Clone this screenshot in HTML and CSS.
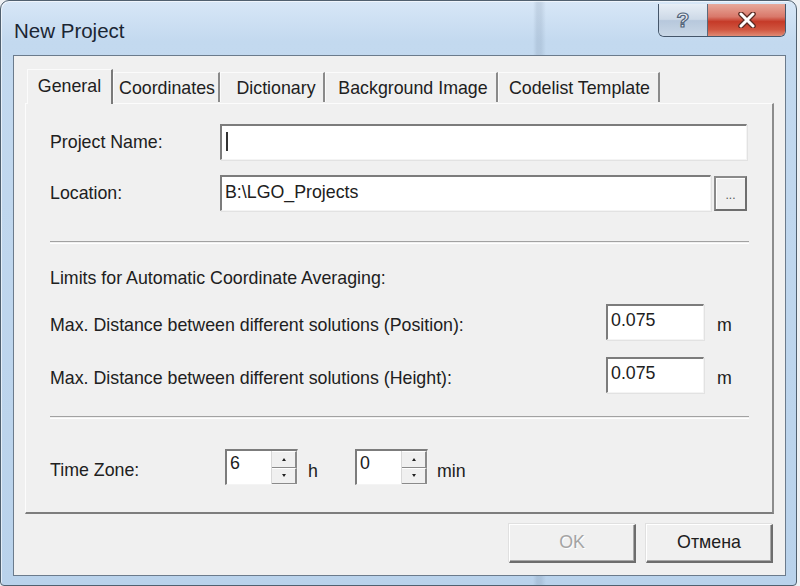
FILE: index.html
```html
<!DOCTYPE html>
<html>
<head>
<meta charset="utf-8">
<title>New Project</title>
<link rel="stylesheet" href="styles.css">
</head>
<body>
<div class="window">
  <div class="titlebar">
    <div class="title">New Project</div>
    <div class="caption-btns">
      <div class="cbtn help"><span class="q">?</span></div>
      <div class="cbtn close">
        <svg width="22" height="16" viewBox="0 0 22 16">
          <path d="M5 2 L17 14 M17 2 L5 14" stroke="#5a2a22" stroke-width="5.5" stroke-linecap="round"/>
          <path d="M5 2 L17 14 M17 2 L5 14" stroke="#ffffff" stroke-width="3" stroke-linecap="round"/>
        </svg>
      </div>
    </div>
  </div>
  <div class="client">
    <div class="tabs">
      <div class="tab active t-general">General</div>
      <div class="tab t-coord">Coordinates</div>
      <div class="tab t-dict">Dictionary</div>
      <div class="tab t-bg">Background Image</div>
      <div class="tab t-code">Codelist Template</div>
    </div>
    <div class="panel">
      <div class="row r-name">
        <span class="lbl">Project Name:</span>
        <div class="field grow"><span class="caret"></span></div>
      </div>
      <div class="row r-loc">
        <span class="lbl">Location:</span>
        <div class="field grow">B:\LGO_Projects</div>
        <div class="browse">...</div>
      </div>
      <div class="sep sep1"></div>
      <div class="heading">Limits for Automatic Coordinate Averaging:</div>
      <div class="row r-pos">
        <span class="grow">Max. Distance between different solutions (Position):</span>
        <div class="field num">0.075</div>
        <span class="unit">m</span>
      </div>
      <div class="row r-hgt">
        <span class="grow">Max. Distance between different solutions (Height):</span>
        <div class="field num">0.075</div>
        <span class="unit">m</span>
      </div>
      <div class="sep sep2"></div>
      <div class="row r-time">
        <span class="lbl-time">Time Zone:</span>
        <div class="spin">
          <div class="spin-val">6</div>
          <div class="spin-btns">
            <div class="sb up"><i></i></div>
            <div class="sb down"><i></i></div>
          </div>
        </div>
        <span class="spin-unit u-h">h</span>
        <div class="spin">
          <div class="spin-val">0</div>
          <div class="spin-btns">
            <div class="sb up"><i></i></div>
            <div class="sb down"><i></i></div>
          </div>
        </div>
        <span class="spin-unit u-min">min</span>
      </div>
    </div>
    <div class="buttons">
      <div class="btn disabled">OK</div>
      <div class="btn">Отмена</div>
    </div>
  </div>
</div>
</body>
</html>
```

FILE: styles.css
```css
html, body {
  margin: 0;
  padding: 0;
  background: #eef1f4;
}
body {
  width: 800px;
  height: 586px;
  overflow: hidden;
  font-family: "Liberation Sans", Arial, sans-serif;
  font-size: 17.8px;
  color: #202020;
}
.window {
  box-sizing: border-box;
  width: 797px;
  height: 586px;
  border: 1px solid #50606f;
  border-radius: 9px 9px 4px 4px;
  background:
    linear-gradient(to right, transparent 532px, rgba(70,90,115,0.13) 536px, rgba(70,90,115,0.13) 540px, transparent 545px),
    linear-gradient(to bottom, #d7e7f7 0px, #c3d9ef 40px, #b9d2eb 100%);
  display: flex;
  flex-direction: column;
  box-shadow: inset 1px 1px 0 rgba(255,255,255,0.6);
}
.titlebar {
  height: 54px;
  display: flex;
  align-items: flex-start;
  justify-content: space-between;
}
.title {
  margin: 18px 0 0 13px;
  font-size: 20.5px;
  color: #1b2633;
}
.caption-btns {
  display: flex;
  margin: 3px 10px 0 0;
  border: 1px solid #45566a;
  border-top: none;
  border-radius: 0 0 6px 6px;
  overflow: hidden;
  height: 32px;
}
.cbtn {
  display: flex;
  align-items: center;
  justify-content: center;
}
.help {
  width: 48px;
  background: linear-gradient(to bottom, #e7eef6 0%, #cdd9e7 48%, #b7c8dc 52%, #c9d7e6 100%);
  border-right: 1px solid #5a6a7c;
}
.q {
  font-family: "Liberation Sans", Arial, sans-serif;
  font-weight: bold;
  font-size: 21px;
  color: #e9eef4;
  -webkit-text-stroke: 1.2px #52647a;
  margin-top: -1px;
}
.close {
  width: 77px;
  background: linear-gradient(to bottom, #e8a99b 0%, #d9786a 40%, #c53a28 55%, #d0553f 80%, #e08a74 100%);
}
.client {
  flex: 1;
  margin: 0 10px 9px 12px;
  border: 1px solid #6b7b8c;
  background: #f0f0f0;
  padding: 12px 11px 0 11px;
  display: flex;
  flex-direction: column;
}
.tabs {
  display: flex;
  align-items: flex-end;
  height: 35px;
  margin-left: 2px;
  position: relative;
  z-index: 2;
}
.tab {
  box-sizing: border-box;
  height: 30px;
  margin-bottom: 1px;
  border-top: 1px solid #fbfbfb;
  border-left: 1px solid #fbfbfb;
  border-right: 2px solid #8a8a8a;
  display: flex;
  align-items: center;
  justify-content: center;
  padding-top: 1px;
  white-space: nowrap;
}
.tab.active {
  height: 35px;
  margin-bottom: -1px;
  background: #f0f0f0;
  border-right: 2px solid #7a7a7a;
  padding-bottom: 3px;
  padding-left: 0;
}
.t-general { width: 86px; }
.t-coord { width: 107px; padding-left: 2px; }
.t-dict { width: 105px; padding-left: 8px; }
.t-bg { width: 173px; padding-left: 4px; }
.t-code { width: 162px; padding-left: 2px; }

.panel {
  box-sizing: border-box;
  height: 411px;
  border-top: 1px solid #fcfcfc;
  border-left: 1px solid #fcfcfc;
  border-right: 2px solid #8c8c8c;
  border-bottom: 2px solid #7d7d7d;
  padding: 0 25px 0 24px;
  display: flex;
  flex-direction: column;
  position: relative;
  z-index: 1;
}
.row {
  display: flex;
  align-items: center;
}
.grow { flex: 1; }
.lbl { width: 170px; }
.field {
  box-sizing: border-box;
  height: 36px;
  background: #ffffff;
  border-top: 2px solid #7c7c7c;
  border-left: 2px solid #7c7c7c;
  border-right: 1px solid #f4f4f4;
  border-bottom: 1px solid #f4f4f4;
  box-shadow: 1px 1px 0 #e2e2e2;
  padding: 4px 0 0 3px;
  line-height: 22px;
}
.caret {
  display: inline-block;
  width: 0;
  height: 19px;
  border-left: 2px solid #333;
  margin: 2px 0 0 1px;
}
.r-name { margin-top: 20px; }
.r-loc { margin-top: 15px; }
.r-loc .field { margin-right: 3px; }
.browse {
  box-sizing: border-box;
  width: 33px;
  height: 35px;
  border: 2px solid #6e6e6e;
  border-top-color: #8a8a8a;
  border-left-color: #8a8a8a;
  background: #f0f0f0;
  box-shadow: inset 1px 1px 0 #ffffff;
  display: flex;
  justify-content: center;
  align-items: flex-end;
  font-size: 12px;
  color: #555;
  line-height: 1;
  padding-bottom: 8px;
}
.sep {
  height: 1px;
  border-top: 1px solid #a2a2a2;
  border-bottom: 1px solid #ffffff;
  margin-right: -2px;
}
.sep1 { margin-top: 30px; }
.heading {
  margin-top: 24px;
  line-height: 20px;
}
.r-pos { margin-top: 16px; }
.r-hgt { margin-top: 17px; }
.r-pos .grow, .r-hgt .grow { padding-top: 6px; }
.num {
  width: 98px;
  padding-top: 3px;
}
.unit {
  width: 43px;
  box-sizing: border-box;
  padding: 6px 0 0 13px;
}
.sep2 { margin-top: 23px; }
.r-time { margin-top: 30px; }
.lbl-time {
  width: 175px;
  padding-top: 6px;
}
.spin {
  box-sizing: border-box;
  width: 73px;
  height: 36px;
  background: #ffffff;
  border-top: 2px solid #7c7c7c;
  border-left: 2px solid #7c7c7c;
  border-right: 1px solid #f4f4f4;
  border-bottom: 1px solid #f4f4f4;
  display: flex;
}
.spin-val {
  flex: 1;
  padding: 1px 0 0 3px;
  line-height: 22px;
}
.spin-btns {
  width: 25px;
  display: flex;
  flex-direction: column;
  border-left: 1px solid #d8d8d8;
}
.sb {
  flex: 1;
  box-sizing: border-box;
  background: #f0f0f0;
  border-right: 2px solid #8a8a8a;
  border-bottom: 1px solid #8a8a8a;
  border-top: 1px solid #ffffff;
  display: flex;
  align-items: center;
  justify-content: center;
}
.sb i {
  display: block;
  width: 0;
  height: 0;
  border-left: 2.5px solid transparent;
  border-right: 2.5px solid transparent;
}
.sb.up i { border-bottom: 3px solid #222; }
.sb.down i { border-top: 3px solid #222; }
.spin-unit {
  padding: 8px 0 0 10px;
  box-sizing: border-box;
}
.u-h { width: 57px; }
.u-min { padding-left: 9px; }
.buttons {
  display: flex;
  justify-content: flex-end;
  gap: 10px;
  margin-top: 10px;
  margin-right: 1px;
}
.btn {
  box-sizing: border-box;
  width: 127px;
  height: 39px;
  border-top: 1px solid #ffffff;
  border-left: 1px solid #ffffff;
  border-right: 2px solid #6d6d6d;
  border-bottom: 2px solid #6d6d6d;
  box-shadow: inset -1px -1px 0 #a8a8a8, -1px -1px 0 #e0e0e0;
  background: #f0f0f0;
  display: flex;
  align-items: center;
  justify-content: center;
  font-size: 17.8px;
  padding-bottom: 2px;
}
.btn.disabled {
  color: #a4a4a4;
  text-shadow: 1px 1px 0 #ffffff;
}
```
